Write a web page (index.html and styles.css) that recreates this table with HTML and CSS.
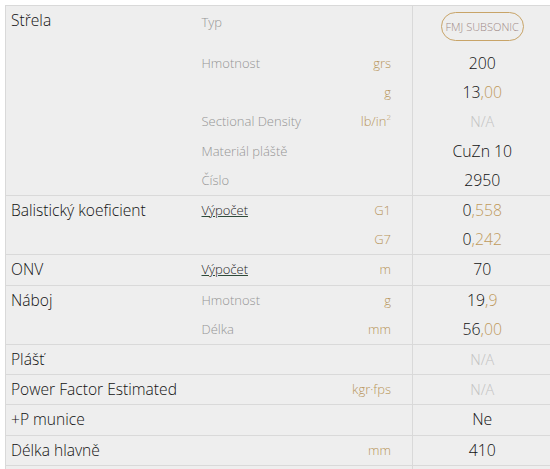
FILE: index.html
```html
<!DOCTYPE html>
<html lang="cs">
<head>
<meta charset="utf-8">
<link rel="stylesheet" href="styles.css">
</head>
<body>
<table class="spec">
  <colgroup>
    <col class="c-name">
    <col class="c-label">
    <col class="c-unit">
    <col class="c-value">
  </colgroup>
  <tbody class="group">
    <tr class="first">
      <td class="name" rowspan="6">Střela</td>
      <td class="label">Typ</td>
      <td class="unit"></td>
      <td class="value"><span class="badge">FMJ SUBSONIC</span></td>
    </tr>
    <tr>
      <td class="label">Hmotnost</td>
      <td class="unit">grs</td>
      <td class="value">200</td>
    </tr>
    <tr>
      <td class="label"></td>
      <td class="unit">g</td>
      <td class="value">13<span class="dec">,00</span></td>
    </tr>
    <tr>
      <td class="label">Sectional Density</td>
      <td class="unit">lb/in<sup>2</sup></td>
      <td class="value na">N/A</td>
    </tr>
    <tr>
      <td class="label">Materiál pláště</td>
      <td class="unit"></td>
      <td class="value">CuZn 10</td>
    </tr>
    <tr>
      <td class="label">Číslo</td>
      <td class="unit"></td>
      <td class="value">2950</td>
    </tr>
  </tbody>
  <tbody class="group">
    <tr>
      <td class="name" rowspan="2">Balistický koeficient</td>
      <td class="label"><a class="link" href="#">Výpočet</a></td>
      <td class="unit">G1</td>
      <td class="value">0<span class="dec">,558</span></td>
    </tr>
    <tr>
      <td class="label"></td>
      <td class="unit">G7</td>
      <td class="value">0<span class="dec">,242</span></td>
    </tr>
  </tbody>
  <tbody class="group">
    <tr>
      <td class="name">ONV</td>
      <td class="label"><a class="link" href="#">Výpočet</a></td>
      <td class="unit">m</td>
      <td class="value">70</td>
    </tr>
  </tbody>
  <tbody class="group">
    <tr>
      <td class="name" rowspan="2">Náboj</td>
      <td class="label">Hmotnost</td>
      <td class="unit">g</td>
      <td class="value">19<span class="dec">,9</span></td>
    </tr>
    <tr>
      <td class="label">Délka</td>
      <td class="unit">mm</td>
      <td class="value">56<span class="dec">,00</span></td>
    </tr>
  </tbody>
  <tbody class="group">
    <tr>
      <td class="name">Plášť</td>
      <td class="label"></td>
      <td class="unit"></td>
      <td class="value na">N/A</td>
    </tr>
  </tbody>
  <tbody class="group">
    <tr>
      <td class="name">Power Factor Estimated</td>
      <td class="label"></td>
      <td class="unit">kgr·fps</td>
      <td class="value na">N/A</td>
    </tr>
  </tbody>
  <tbody class="group">
    <tr>
      <td class="name">+P munice</td>
      <td class="label"></td>
      <td class="unit"></td>
      <td class="value">Ne</td>
    </tr>
  </tbody>
  <tbody class="group">
    <tr>
      <td class="name">Délka hlavně</td>
      <td class="label"></td>
      <td class="unit">mm</td>
      <td class="value">410</td>
    </tr>
  </tbody>
  <tbody class="group">
    <tr>
      <td class="name">&nbsp;</td>
      <td class="label"></td>
      <td class="unit"></td>
      <td class="value">&nbsp;</td>
    </tr>
  </tbody>
</table>
</body>
</html>
```

FILE: styles.css
```css
html, body {
  margin: 0;
  padding: 0;
  background: #ffffff;
}

body {
  height: 469px;
  box-sizing: border-box;
  padding: 5px 0 0 5px;
  overflow: hidden;
  font-family: "Open Sans", Lato, sans-serif;
  color: #151515;
}

.spec {
  width: 546px;
  border-collapse: collapse;
  table-layout: fixed;
  background: #eeeeee;
  border-top: 1px solid #d9d9d9;
  border-left: 1px solid #d9d9d9;
}

.c-name { width: 196px; }
.c-label { width: 140px; }
.c-unit { width: 71px; }
.c-value { width: 139px; }

.spec td {
  padding: 5px 0;
  height: 19.2px;
  line-height: 19.2px;
  vertical-align: top;
  white-space: nowrap;
}

.group {
  border-bottom: 1px solid #d9d9d9;
}

.spec .name {
  padding-left: 5px;
  font-weight: 300;
  font-size: 15.6px;
  color: #111111;
}

.label {
  font-weight: 300;
  font-size: 13px;
  color: #959595;
}

.spec .unit {
  padding-right: 21px;
  text-align: right;
  font-weight: 300;
  font-size: 13px;
  color: #b8955a;
}

.unit sup {
  font-size: 8px;
  line-height: 0;
  vertical-align: 6px;
}

.value {
  border-left: 1px solid #d9d9d9;
  text-align: center;
  font-weight: 300;
  font-size: 15.8px;
  color: #111111;
}

.value .dec {
  color: #bf9a5c;
}

.value.na {
  color: #c2c2c2;
  font-size: 14.5px;
}

.spec .first td {
  padding-top: 6px;
  padding-bottom: 8px;
}

.spec .first td.name {
  padding-top: 5px;
}

.spec .first td.label {
  padding-top: 7px;
}

.badge {
  display: inline-block;
  box-sizing: border-box;
  height: 29px;
  padding: 0 4px;
  border: 1px solid #c8a468;
  border-radius: 15px;
  font-size: 11px;
  font-weight: 300;
  line-height: 27px;
  color: #9f8a86;
  letter-spacing: 0;
  vertical-align: top;
}

.link {
  color: #1f1f1f;
  font-weight: 300;
  text-decoration: underline;
  text-decoration-color: #2f4a3a;
}
```
